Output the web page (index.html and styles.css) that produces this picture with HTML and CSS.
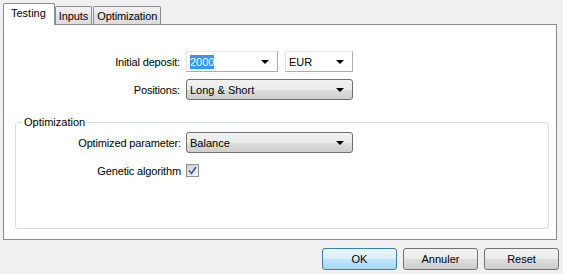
FILE: index.html
```html
<!doctype html>
<html>
<head>
	<meta charset="utf-8">
	<link rel="stylesheet" href="styles.css">
</head>
<body>
<div class="dialog">
	<div class="tabs">
		<div class="tab active">Testing</div>
		<div class="tab">Inputs</div>
		<div class="tab">Optimization</div>
	</div>
	<div class="panel">
		<div class="form">
			<label class="lbl">Initial deposit:</label>
			<div class="pair">
				<div class="combo edit deposit"><span class="sel">2000</span><i class="arrow"></i></div>
				<div class="combo edit currency"><span>EUR</span><i class="arrow"></i></div>
			</div>
			<label class="lbl">Positions:</label>
			<div class="combo drop"><span>Long &amp; Short</span><i class="arrow"></i></div>
		</div>
		<fieldset class="group">
			<legend>Optimization</legend>
			<div class="form inner">
				<label class="lbl">Optimized parameter:</label>
				<div class="combo drop"><span>Balance</span><i class="arrow"></i></div>
				<label class="lbl">Genetic algorithm</label>
				<div class="check-cell"><span class="check"><svg width="9" height="9" viewBox="0 0 9 9"><path d="M1 4.5 L3.5 7.5 L8 1" fill="none" stroke="#3d5a91" stroke-width="1.6"/></svg></span></div>
			</div>
		</fieldset>
	</div>
	<div class="buttons">
		<button class="btn default">OK</button>
		<button class="btn">Annuler</button>
		<button class="btn">Reset</button>
	</div>
</div>
</body>
</html>
```
FILE: styles.css
```css
html, body { margin: 0; background: #f0f0f0; }
body { font-family: "Liberation Sans", Arial, sans-serif; font-size: 11px; color: #000; }

.dialog { width: 563px; height: 274px; padding: 3px 0 0 3px; box-sizing: border-box; }

.tabs { display: flex; align-items: flex-end; height: 21px; position: relative; z-index: 1; }
.tab { height: 18px; line-height: 18px; padding: 0 3px; border: 1px solid #898c95; border-bottom: none; margin-right: 1px; box-sizing: border-box; border-radius: 2px 2px 0 0; background: linear-gradient(#f3f3f3, #e5e5e5 50%, #dcdcdc); letter-spacing: -0.1px; }
.tab.active { height: 22px; line-height: 19px; padding: 0 8px 0 7px; background: #fff; margin-bottom: -1px; margin-right: 0; letter-spacing: 0; }

.panel { width: 554px; height: 216px; box-sizing: border-box; border: 1px solid #898c95; background: #fff; padding-top: 26px; }

.form { display: grid; grid-template-columns: 176px auto; column-gap: 6px; row-gap: 7px; align-items: center; }
.lbl { text-align: right; letter-spacing: -0.15px; }
.pair { display: flex; gap: 7px; }

.combo { height: 21px; box-sizing: border-box; display: flex; align-items: center; justify-content: space-between; padding: 0 8px 0 3px; width: 167px; }
.combo.edit { border: 1px solid #abadb3; border-top-color: #e3e9ef; border-left-color: #e2e3ea; background: #fff; }
.combo.deposit { width: 92px; }
.combo.currency { width: 68px; }
.combo.drop { border: 1px solid #707070; border-radius: 3px; background: linear-gradient(#f2f2f2, #ebebeb 50%, #dddddd 51%, #cfcfcf); }
.sel { background: #3399ff; color: #fff; padding: 1px 0; }
.arrow { width: 0; height: 0; border-left: 4px solid transparent; border-right: 4px solid transparent; border-top: 4px solid #000; }

.group { margin: 16px 7px 0 11px; padding: 4px 0 0 0; height: 113px; box-sizing: border-box; border: 1px solid #d5dfe5; border-radius: 3px; }
.group legend { margin-left: 6px; padding: 0 2px; }
.form.inner { grid-template-columns: 165px auto; column-gap: 5px; }

.check-cell { height: 21px; display: flex; align-items: center; }
.check { width: 13px; height: 13px; box-sizing: border-box; border: 1px solid #8e8f8f; background: linear-gradient(135deg, #cbcfd5, #f6f6f6); display: flex; align-items: center; justify-content: center; }

.buttons { display: flex; justify-content: flex-end; gap: 6px; padding: 8px 4px 0 0; }
.btn { width: 75px; height: 22px; font: inherit; color: #000; border: 1px solid #707070; border-radius: 3px; background: linear-gradient(#f2f2f2, #ebebeb 50%, #dddddd 51%, #cfcfcf); padding: 0; }
.btn.default { border-color: #3c7fb1; background: linear-gradient(#eaf6fd, #d9f0fc 50%, #bee6fd 51%, #a7d9f5); }
```
